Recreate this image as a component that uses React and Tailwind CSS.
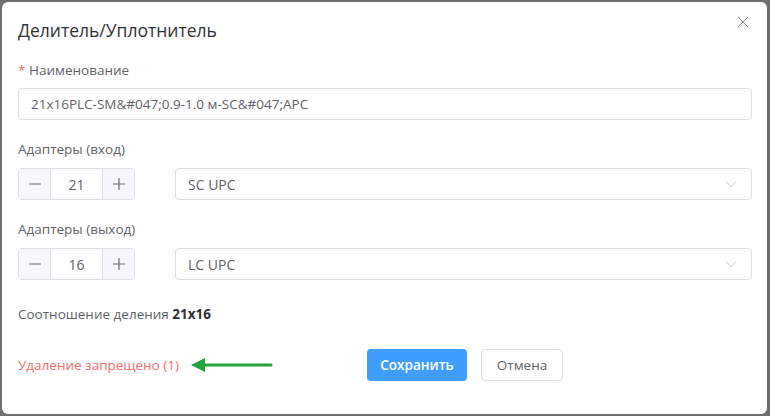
import React from "react";

const Stepper = ({ value }) => (
  <div className="flex h-[32px] w-[117px] rounded border border-[#dcdfe6] overflow-hidden">
    <div className="w-[32px] flex items-center justify-center bg-[#f5f7fa] border-r border-[#dcdfe6] text-[#606266]">
      <svg width="14" height="14" viewBox="0 0 14 14"><path d="M1 7h12" stroke="#606266" strokeWidth="1.1" /></svg>
    </div>
    <div className="flex-1 flex items-center justify-center text-[14px] text-[#606266]">{value}</div>
    <div className="w-[32px] flex items-center justify-center bg-[#f5f7fa] border-l border-[#dcdfe6]">
      <svg width="14" height="14" viewBox="0 0 14 14"><path d="M1 7h12M7 1v12" stroke="#606266" strokeWidth="1.1" /></svg>
    </div>
  </div>
);

const Select = ({ value }) => (
  <div className="ml-[40px] flex-1 h-[32px] rounded border border-[#dcdfe6] flex items-center justify-between pl-[12px] pr-[14px] text-[14px] text-[#606266]">
    <span>{value}</span>
    <svg width="12" height="8" viewBox="0 0 12 8"><path d="M1 1.5l5 5 5-5" fill="none" stroke="#c0c4cc" strokeWidth="1" /></svg>
  </div>
);

export default function App() {
  return (
    <div className="w-[770px] h-[416px] bg-[#6e6e6e] pt-[2px] pl-[2px]" style={{ fontFamily: '"Open Sans", "Noto Sans", sans-serif' }}>
      <div className="w-[765px] h-[412px] bg-white rounded-[6px] pl-[16px] pr-[15px] pt-[16px] relative">
        <div className="flex items-center justify-between h-[24px]">
          <h1 className="text-[17.5px] text-[#303133] leading-[24px]">Делитель/Уплотнитель</h1>
          <svg className="absolute right-[18px] top-[14px]" width="12" height="12" viewBox="0 0 12 12"><path d="M1 1l10 10M11 1L1 11" stroke="#909399" strokeWidth="1" /></svg>
        </div>

        <div className="mt-[18px] text-[13.5px] leading-[20px] text-[#606266]"><span className="text-[#f56c6c]">*</span> Наименование</div>
        <div className="mt-[8px] h-[32px] rounded border border-[#dcdfe6] flex items-center px-[12px] text-[13.5px] text-[#606266]">
          21x16PLC-SM&amp;#047;0.9-1.0 м-SC&amp;#047;APC
        </div>

        <div className="mt-[19px] text-[13.5px] leading-[20px] text-[#606266]">Адаптеры (вход)</div>
        <div className="mt-[9px] flex">
          <Stepper value="21" />
          <Select value="SC UPC" />
        </div>

        <div className="mt-[19px] text-[13.5px] leading-[20px] text-[#606266]">Адаптеры (выход)</div>
        <div className="mt-[9px] flex">
          <Stepper value="16" />
          <Select value="LC UPC" />
        </div>

        <div className="mt-[24px] text-[13.5px] leading-[20px] text-[#606266]">Соотношение деления <b className="text-[#303133]">21x16</b></div>

        <div className="mt-[25px] flex items-center">
          <div className="w-[349px] flex items-center">
            <span className="text-[13.5px] text-[#f56c6c]">Удаление запрещено (1)</span>
            <svg className="ml-[12px]" width="82" height="16" viewBox="0 0 82 16">
              <path d="M0 8L14 1v14z" fill="#22a43a" />
              <path d="M12 8h68" stroke="#22a43a" strokeWidth="3" strokeLinecap="round" />
            </svg>
          </div>
          <button className="h-[32px] w-[100px] rounded bg-[#409eff] text-white text-[13.5px] font-semibold">Сохранить</button>
          <button className="ml-[14px] h-[32px] w-[82px] rounded border border-[#dcdfe6] bg-white text-[#606266] text-[13.5px]">Отмена</button>
        </div>
      </div>
    </div>
  );
}
